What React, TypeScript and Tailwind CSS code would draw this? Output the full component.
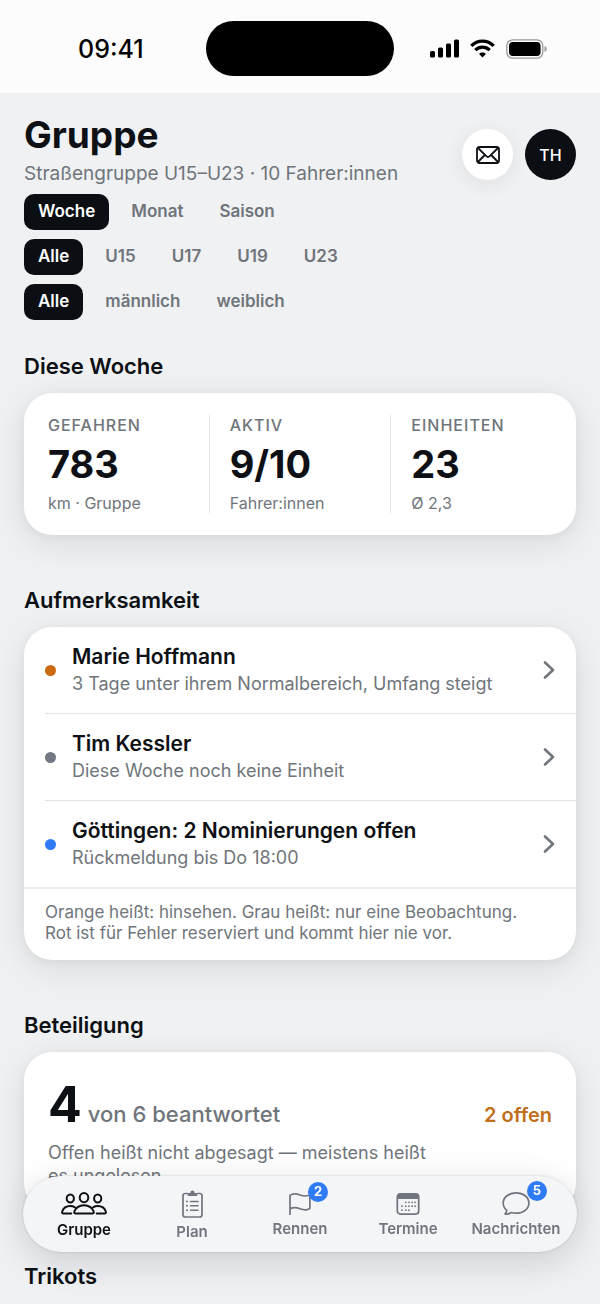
import React from "react";

const font = "font-['Inter','Liberation_Sans',sans-serif]";
const cardShadow = "shadow-[0_8px_36px_rgba(20,22,24,0.10),0_2px_8px_rgba(20,22,24,0.05)]";

const filters = [
  { name: "Zeitraum", options: ["Woche", "Monat", "Saison"] },
  { name: "Altersklasse", options: ["Alle", "U15", "U17", "U19", "U23"] },
  { name: "Geschlecht", options: ["Alle", "männlich", "weiblich"] },
];

const stats = [
  { label: "GEFAHREN", value: "783", sub: "km · Gruppe" },
  { label: "AKTIV", value: "9/10", sub: "Fahrer:innen" },
  { label: "EINHEITEN", value: "23", sub: "Ø 2,3" },
];

const alerts = [
  { title: "Marie Hoffmann", text: "3 Tage unter ihrem Normalbereich, Umfang steigt", dot: "bg-[#cc6a14]" },
  { title: "Tim Kessler", text: "Diese Woche noch keine Einheit", dot: "bg-[#747885]" },
  { title: "Göttingen: 2 Nominierungen offen", text: "Rückmeldung bis Do 18:00", dot: "bg-[#2f7bf6]" },
];

function GroupIcon() {
  return (
    <svg width="46" height="24" viewBox="0 0 46 24" fill="none" stroke="currentColor" strokeWidth="2" strokeLinecap="round">
      <ellipse cx="23" cy="5.6" rx="4.3" ry="4.6" />
      <ellipse cx="9.3" cy="6.4" rx="3.6" ry="4" />
      <ellipse cx="36.7" cy="6.4" rx="3.6" ry="4" />
      <path d="M14.8 21.6h16.4c1.4 0 1.900-.9 1.500-2.100-1-3.300-4.700-6.300-9.700-6.300s-8.700 3-9.700 6.300c-.4 1.200.1 2.100 1.500 2.100z" />
      <path d="M10.3 21.6H2.6c-1.4 0-1.8-1-1.4-2.100 1-3.100 4.300-5.400 8.100-5.400 1.800 0 3.300.4 4.600 1.200" />
      <path d="M35.7 21.6h7.700c1.400 0 1.800-1 1.400-2.100-1-3.100-4.300-5.400-8.100-5.400-1.800 0-3.300.4-4.600 1.200" />
    </svg>
  );
}

function ClipboardIcon() {
  return (
    <svg width="21" height="28" viewBox="0 0 21 28" fill="none" stroke="currentColor" strokeWidth="1.7" strokeLinecap="round">
      <path d="M5.500 3.500H3.300C1.800 3.500 1 4.400 1 5.800v18.900C1 26.200 1.800 27 3.300 27h14.400c1.500 0 2.300-.8 2.300-2.300V5.800c0-1.400-.8-2.300-2.300-2.300h-2.200" />
      <path d="M5.800 6V4.200c0-.8.5-1.200 1.200-1.200h1.300c0-1.600.9-2.600 2.200-2.600s2.200 1 2.200 2.600H14c.7 0 1.200.4 1.200 1.200V6z" fill="currentColor" stroke="none" />
      <path d="M8.500 11.400h7.500M8.500 15.800h7.500M8.500 20.200h7.500" strokeWidth="1.500" />
      <path d="M4.900 11.400h.1M4.900 15.800h.1M4.900 20.200h.1" strokeWidth="1.900" />
    </svg>
  );
}

function FlagIcon() {
  return (
    <svg width="22" height="22" viewBox="0 0 22 22" fill="none" stroke="currentColor" strokeWidth="1.7" strokeLinecap="round" strokeLinejoin="round">
      <path d="M1 21.400V2.400C2.200 1.300 4 .9 6 .9c4 0 6 2.100 10 2.100 1.600 0 2.900-.3 4-.7.5-.2.900 0 .9.600v12c0 .5-.2.800-.7 1-1.200.6-2.600.9-4.200.9-4 0-6-2.100-10-2.100-2 0-3.800.5-5 1.200" />
    </svg>
  );
}

function CalendarIcon() {
  return (
    <svg width="24" height="22" viewBox="0 0 24 22" fill="none" stroke="currentColor">
      <rect x="1.300" y=".9" width="21.400" height="20.200" rx="3" strokeWidth="1.700" />
      <path d="M1 6V3.500C1 1.700 2 .6 4 .6h16c2 0 3 1.100 3 2.900V6z" fill="currentColor" stroke="none" />
      <path d="M9.700 9.300h.1M12.900 9.300h.1M16.100 9.300h.1M19 9.300h.1M5.900 13.200h.1M9.700 13.200h.1M12.900 13.200h.1M16.100 13.200h.1M19 13.200h.1M5.900 17.200h.1M9.700 17.200h.1M12.900 17.200h.1" strokeWidth="1.700" strokeLinecap="round" />
    </svg>
  );
}

function BubbleIcon() {
  return (
    <svg width="28" height="23" viewBox="0 0 28 23" fill="none" stroke="currentColor" strokeWidth="1.700" strokeLinejoin="round">
      <path d="M14.200.9C7 .9 1.200 5.200 1.200 11c0 3.200 1.500 5.700 3.500 7.400.2 1-.5 2.200-1.400 3-.4.4-.2.800.3.800 2 0 4.200-.6 5.700-1.700 1.500.5 3.200.7 4.900.7 7.200 0 12.700-4.300 12.700-10.200S21.400.9 14.200.9z" />
    </svg>
  );
}

const tabs = [
  { label: "Gruppe", icon: <GroupIcon />, active: true },
  { label: "Plan", icon: <ClipboardIcon /> },
  { label: "Rennen", icon: <FlagIcon />, badge: 2 },
  { label: "Termine", icon: <CalendarIcon /> },
  { label: "Nachrichten", icon: <BubbleIcon />, badge: 5 },
];

function StatusBar() {
  return (
    <div className="grid grid-cols-[1fr_auto_1fr] items-center bg-[#fcfcfc] pt-[21px] pb-[17px] text-black">
      <div className="pl-[78px] text-[25px] leading-7 font-medium">09:41</div>
      <div className="h-[55px] w-[188px] rounded-full bg-black"></div>
      <div className="flex items-center gap-[11px] pl-9">
        <svg width="29" height="19" viewBox="0 0 29 19" fill="currentColor">
          <rect x="0" y="12" width="5" height="6.500" rx="1.500" />
          <rect x="8" y="8.500" width="5" height="10" rx="1.500" />
          <rect x="16" y="4.500" width="5" height="14" rx="1.500" />
          <rect x="24" y=".5" width="5" height="18" rx="1.500" />
        </svg>
        <svg width="25" height="19" viewBox="0 0 25 19" fill="none" stroke="currentColor" strokeWidth="3.200">
          <path d="M1.300 6.900C4.300 3.900 8.200 2.200 12.500 2.200s8.200 1.700 11.200 4.700" />
          <path d="M5.300 11.100c1.900-1.900 4.400-3 7.200-3s5.300 1.100 7.200 3" />
          <path d="M12.500 18.500l-3.400-3.600c.9-.9 2.100-1.400 3.400-1.400s2.500.5 3.400 1.400z" fill="currentColor" stroke="none" />
        </svg>
        <svg width="41" height="20" viewBox="0 0 41 20" fill="none">
          <rect x=".8" y=".8" width="36" height="18.400" rx="6" stroke="#9b9b9b" strokeWidth="1.300" />
          <rect x="3" y="3" width="31.600" height="14" rx="4" fill="#000" />
          <path d="M38.500 7v6c1.400-.4 2.200-1.600 2.200-3s-.8-2.600-2.200-3z" fill="#9b9b9b" />
        </svg>
      </div>
    </div>
  );
}

function SectionTitle({ children }: { children: React.ReactNode }) {
  return <h2 className="mb-[13px] text-[22px] leading-7 font-semibold">{children}</h2>;
}

export default function App() {
  return (
    <div className={`min-h-screen bg-[#eff1f3] text-[#0d1014] ${font}`}>
      <StatusBar />
      <main className="px-6 pt-[22px]">
        <header className="flex items-center justify-between">
          <div>
            <h1 className="text-[37px] leading-10 font-bold">Gruppe</h1>
            <p className="mt-[7px] mb-2 text-[19px] leading-6 text-[#70757b]">Straßengruppe U15–U23 · 10 Fahrer:innen</p>
          </div>
          <div className="flex gap-3">
            <button aria-label="Nachricht schreiben" className="flex size-[51px] items-center justify-center rounded-full bg-white shadow-[0_4px_20px_rgba(20,24,28,0.08)]">
              <svg width="24" height="18" viewBox="0 0 24 18" fill="none" stroke="currentColor" strokeWidth="1.800" strokeLinejoin="round">
                <rect x="1" y="1" width="22" height="16" rx="2.500" />
                <path d="M2 2l8.300 8.200c1.100 1 2.300 1 3.400 0L22 2M2 16l6.800-7M22 16l-6.800-7" />
              </svg>
            </button>
            <button aria-label="Profil" className="size-[51px] rounded-full bg-[#0b0f13] text-base font-medium text-white">TH</button>
          </div>
        </header>

        <div className="flex flex-col gap-[9px]">
          {filters.map((f) => (
            <div key={f.name} role="group" aria-label={f.name} className="flex gap-2">
              {f.options.map((o, i) => (
                <button
                  key={o}
                  aria-pressed={i === 0}
                  className={`h-9 rounded-[10px] px-[14px] text-[17px] font-semibold ${i === 0 ? "bg-[#0b0f13] text-white" : "text-[#70757b]"}`}
                >
                  {o}
                </button>
              ))}
            </div>
          ))}
        </div>

        <section className="mt-8">
          <SectionTitle>Diese Woche</SectionTitle>
          <div className={`flex gap-5 rounded-[28px] bg-white px-6 py-[22px] ${cardShadow}`}>
            {stats.map((s, i) => (
              <React.Fragment key={s.label}>
                {i > 0 && <div className="w-px bg-[#e3e5e8]"></div>}
                <div className="flex-1">
                  <div className="text-base leading-5 font-medium tracking-[1px] text-[#70757b]">{s.label}</div>
                  <div className="my-[7px] text-[38px] leading-[44px] font-bold">{s.value}</div>
                  <div className="text-base leading-5 text-[#70757b]">{s.sub}</div>
                </div>
              </React.Fragment>
            ))}
          </div>
        </section>

        <section className="mt-[51px]">
          <SectionTitle>Aufmerksamkeit</SectionTitle>
          <div className={`overflow-hidden rounded-[28px] bg-white ${cardShadow}`}>
            <ul className="pl-[21px]">
              {alerts.map((a, i) => (
                <li key={a.title} className={i > 0 ? "border-t border-[#e1e3e6]" : ""}>
                  <a href="#" className="flex items-center py-4 pr-[21px]">
                    <span className={`size-[11px] rounded-full ${a.dot}`}></span>
                    <span className="ml-4 flex-1">
                      <span className="block text-[21px] leading-7 font-semibold">{a.title}</span>
                      <span className="block text-[18px] leading-[26px] text-[#70757b]">{a.text}</span>
                    </span>
                    <svg width="12" height="18" viewBox="0 0 12 18" fill="none" stroke="#72767d" strokeWidth="2.600" strokeLinecap="round" strokeLinejoin="round">
                      <path d="M2 1.500L10 9l-8 7.500" />
                    </svg>
                  </a>
                </li>
              ))}
            </ul>
            <p className="border-t-2 border-[#ebecee] px-[21px] pt-[13px] pb-4 text-[17px] leading-[21px] text-[#70757b]">
              Orange heißt: hinsehen. Grau heißt: nur eine Beobachtung.
              <br />
              Rot ist für Fehler reserviert und kommt hier nie vor.
            </p>
          </div>
        </section>

        <section className="mt-[51px]">
          <SectionTitle>Beteiligung</SectionTitle>
          <div className={`rounded-[28px] bg-white px-6 pt-[22px] pb-6 ${cardShadow}`}>
            <div className="flex items-baseline">
              <span className="text-[50px] leading-[60px] font-bold">4</span>
              <span className="ml-1.5 flex-1 text-[22px] font-medium text-[#70757b]">von 6 beantwortet</span>
              <span className="text-[20px] font-semibold text-[#c0701a]">2 offen</span>
            </div>
            <p className="mt-[7px] max-w-[400px] text-[18px] leading-[23px] text-[#70757b]">
              Offen heißt nicht abgesagt — meistens heißt es ungelesen.
            </p>
          </div>
        </section>

        <section className="mt-[51px]">
          <SectionTitle>Trikots</SectionTitle>
        </section>
      </main>

      <nav className="fixed inset-x-[23px] bottom-[52px] flex h-[76px] items-center rounded-full bg-[#f4f5f6] px-[7px] pt-0.5 shadow-[0_10px_36px_rgba(20,24,28,0.16),0_0_3px_rgba(20,24,28,0.16)]">
        {tabs.map((t) => (
          <a key={t.label} href="#" className={`flex flex-1 flex-col items-center gap-[5px] ${t.active ? "text-[#0d1014]" : "text-[#70757f]"}`}>
            <span className="relative">
              {t.icon}
              {t.badge && (
                <span className="absolute -top-[11px] -right-[17px] flex size-5 items-center justify-center rounded-full bg-[#2f7bf6] text-[13px] font-bold text-white">
                  {t.badge}
                </span>
              )}
            </span>
            <span className="text-[15px] leading-[18px] font-semibold">{t.label}</span>
          </a>
        ))}
      </nav>
    </div>
  );
}
